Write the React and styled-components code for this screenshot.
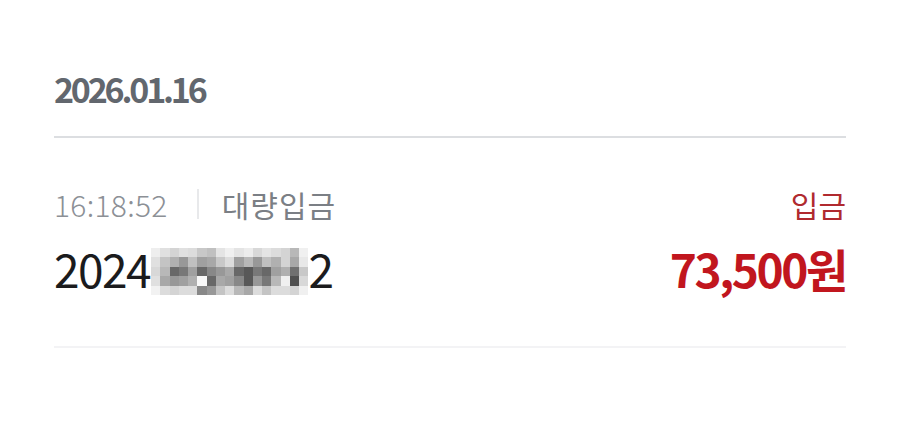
import styled, { createGlobalStyle } from 'styled-components';

const GlobalStyle = createGlobalStyle`
  body {
    margin:0;
    background:#fff;
    font-family:"Noto Sans CJK KR", "Noto Sans", sans-serif;
  }
`;

const Page = styled.div`
  width:900px;
  height:424px;
  padding:0 54px;
  box-sizing:border-box;
  background:#fff;
`;

//----------------------DATE HEADER-----------------
const DateHead = styled.div`
  padding:69px 0 27px;
  border-bottom:2px solid #dcdee1;
  font-size:34px;
  line-height:40px;
  font-weight:700;
  color:#62676e;
  letter-spacing:-3.2px;
`;

//----------------------TRANSACTION ROW-----------------
const Entry = styled.div`
  padding:48px 0 50px;
  border-bottom:2px solid #f3f3f5;
`;

const Line = styled.div`
  display:flex;
  justify-content:space-between;
  align-items:center;
  margin-top:${props => props.gap || 0}px;
`;

const Meta = styled.div`
  display:flex;
  align-items:center;
  font-size:30px;
  line-height:36px;
  color:#85898f;
`;

const Time = styled.span`
  font-weight:300;
  color:#8c9096;
  letter-spacing:0.3px;
`;

const Bar = styled.span`
  width:2px;
  height:30px;
  margin:0 23px 0 29px;
  background:#e8e9eb;
`;

const Kind = styled.span`
  color:${props => props.color || '#7b7f85'};
  font-weight:400;
  letter-spacing:${props => props.spacing || 0}px;
`;

const Account = styled.div`
  display:flex;
  align-items:center;
  font-size:46px;
  line-height:56px;
  color:#1b1b1d;
  letter-spacing:-1.5px;
`;

const Amount = styled.div`
  font-size:46px;
  line-height:56px;
  font-weight:700;
  color:#c1161e;
  letter-spacing:-2.4px;
`;

//----------------------MOSAIC (blurred account digits)-----------------
const Mosaic = styled.div`
  display:grid;
  grid-template-columns:repeat(17, 9.25px);
  grid-auto-rows:9.6px;
  margin:7px 0 0 1px;
`;

const Cell = styled.div`
  background:${props => props.shade};
`;

const shades = [
  'ee e0 d4 e0 dc c8 c0 e4 f0 e4 ec d8 e4 dc d4 b8 f0',
  'e0 c4 b0 98 c0 a0 a8 c8 dc a0 b8 98 c0 b0 d4 a8 e8',
  'd8 b8 68 78 a0 68 88 98 a8 68 58 78 68 a0 b0 70 c8',
  'e0 a8 98 a0 b0 f8 68 a8 a0 88 58 98 78 b8 f0 50 d8',
  'f2 dc d4 dc dc 88 98 c4 dc b8 a8 dc c4 dc dc d4 f0',
].map(r => r.split(' ').map(h => '#' + h + h + h));

const App = () => {
  return <Page>
    <GlobalStyle />
    <DateHead>2026.01.16</DateHead>
    <Entry>
      <Line>
        <Meta>
          <Time>16:18:52</Time>
          <Bar />
          <Kind spacing={1}>대량입금</Kind>
        </Meta>
        <Meta>
          <Kind color="#b02a2f">입금</Kind>
        </Meta>
      </Line>
      <Line gap={18}>
        <Account>
          2024
          <Mosaic>
            {shades.flat().map((s, i) => <Cell key={i} shade={s} />)}
          </Mosaic>
          2
        </Account>
        <Amount>73,500원</Amount>
      </Line>
    </Entry>
  </Page>
}

export default App;
